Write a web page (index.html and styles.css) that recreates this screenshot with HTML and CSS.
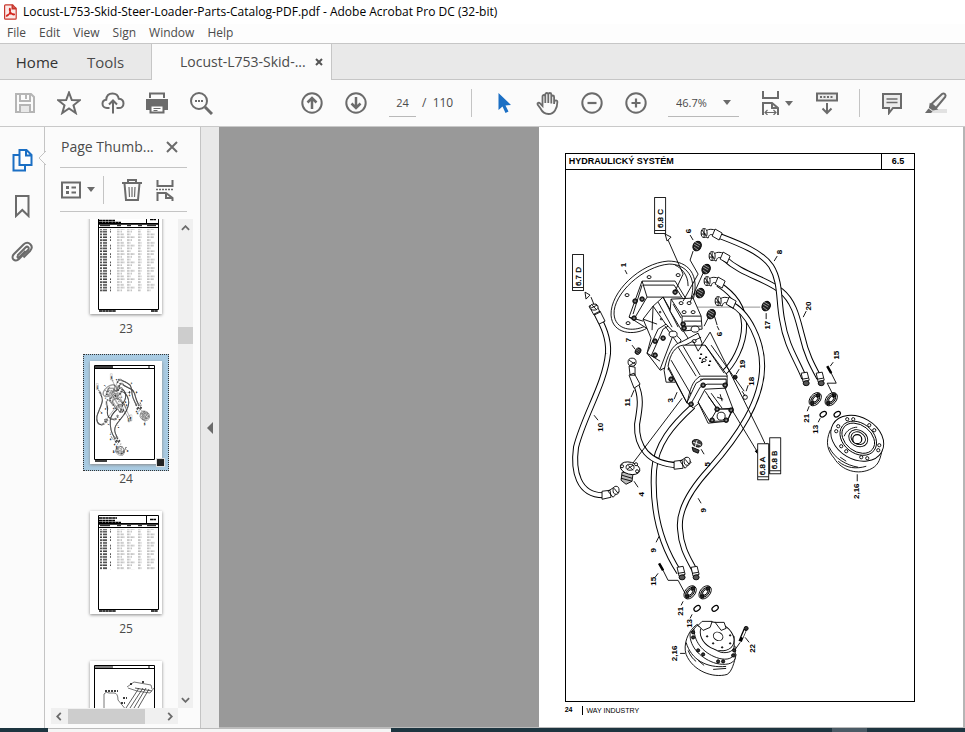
FILE: index.html
```html
<!DOCTYPE html>
<html lang="en">
<head>
<meta charset="utf-8">
<title>Locust-L753-Skid-Steer-Loader-Parts-Catalog-PDF.pdf - Adobe Acrobat Pro DC (32-bit)</title>
<link rel="stylesheet" href="styles.css">
</head>
<body>
<header class="titlebar">
  <svg class="app-icon" viewBox="0 0 13 16" aria-hidden="true"><path d="M1.5.8h7L12.2 4.500v9.800q0 .9-.9.900H1.500q-.9 0-.9-.9V1.700q0-.9.9-.9z" fill="#fbe9e7" stroke="#c8372d" stroke-width="1.200"/><path d="M8.500.8v3.700h3.700" fill="none" stroke="#c8372d"/><path d="M2.700 12.200C5 11.500 7 7 6.200 4.800c-.9-1.200-1.300 1.200.2 3.400 1 1.500 2.500 2.900 3.900 2.500 1.100-1-3.300-1.700-7 .3-1 .6-1.200 1.400-.6 1.200z" fill="none" stroke="#d3231b" stroke-width="1.200"/></svg>
  <span>Locust-L753-Skid-Steer-Loader-Parts-Catalog-PDF.pdf - Adobe Acrobat Pro DC (32-bit)</span>
</header>
<nav class="menubar" aria-label="Menu">
  <button>File</button><button>Edit</button><button>View</button><button>Sign</button><button>Window</button><button>Help</button>
</nav>
<nav class="tabs" aria-label="Tabs">
  <button class="tab-home">Home</button>
  <button class="tab-tools">Tools</button>
  <div class="tab-doc"><span>Locust-L753-Skid-...</span><button class="tab-close" aria-label="Close tab"><svg viewBox="0 0 8 8"><path d="M1 1l6 6M7 1L1 7"/></svg></button></div>
</nav>
<div class="toolbar" role="toolbar" aria-label="Tools">
  <button class="tool pale" aria-label="Save"><svg viewBox="0 0 24 24"><path d="M3 3h15l3 3v15H3z"/><path d="M7 3v7h10V3M13 4v4" /><path d="M7 21v-7h10v7" fill="#e8e8e8"/></svg></button>
  <button class="tool" aria-label="Star"><svg viewBox="0 0 24 24"><path d="M12 1.500l2.800 7.500 8 .3-6.300 5 2.200 7.700-6.700-4.500L5.300 22l2.200-7.700-6.300-5 8-.3z"/></svg></button>
  <button class="tool" aria-label="Upload"><svg viewBox="0 0 24 24"><path d="M8.500 17H6c-2.600 0-4.500-1.800-4.500-4.200 0-2.200 1.500-3.800 3.700-4C5.500 5 8 2.500 11.500 2.500c3.300 0 5.700 2.100 6.300 5.200 2.700.2 4.700 2.100 4.700 4.700 0 2.700-2 4.600-4.700 4.600h-2.300M12 22.500v-12M8 13.500l4-4 4 4"/></svg></button>
  <button class="tool" aria-label="Print"><svg viewBox="0 0 24 24"><path d="M5 7V2.500h14V7" /><path d="M1 8h22v11h-4v-4H5v4H1z" fill="#6b6b6b" stroke="none"/><path d="M5.500 14.500h13v7h-13z" fill="#fff"/><path d="M8.500 17.500h7M8.500 19.500h4" stroke-width="1"/></svg></button>
  <button class="tool" aria-label="Search"><svg viewBox="0 0 24 24"><circle cx="10" cy="10" r="8"/><path d="M16 16l7 7" stroke-width="3"/><path d="M6 10h2M9 10h2M12 10h2"/></svg></button>
  <button class="tool page-up" aria-label="Previous page"><svg viewBox="0 0 24 24"><circle cx="12" cy="12" r="9.700"/><path d="M12 18V8M7.500 11.500L12 7l4.500 4.500" stroke-width="2.500"/></svg></button>
  <button class="tool" aria-label="Next page"><svg viewBox="0 0 24 24"><circle cx="12" cy="12" r="9.700"/><path d="M12 6v10M7.500 12.500L12 17l4.500-4.500" stroke-width="2.500"/></svg></button>
  <input class="page-number" aria-label="Page number" value="24">
  <span class="page-count">/&nbsp; 110</span>
  <i class="divider"></i>
  <button class="tool select-tool" aria-label="Select"><svg viewBox="0 0 24 24"><path d="M6.500 2v17l4-3.500 3 6.500 3-1.500-3-6 5.500-.5z" fill="#1b6fc4" stroke="none"/></svg></button>
  <button class="tool" aria-label="Pan"><svg viewBox="0 0 24 24"><path d="M6.500 15V5.500c0-2 2.800-2 2.800 0V12 3.500c0-2 3-2 3 0V12 3.500c0-2 3-2 3 0V12.500 6c0-2 2.800-2 2.800 0v7l.3-2.500c.4-1.800 3-1.500 3 .3 0 3.500-.8 6.200-2.400 8.700-1.500 2.300-3.500 3.500-6.500 3.500-4.500 0-6.500-2.500-8-5.500L1.600 13.500c-.6-1.500 1.300-2.300 2.500-1.200L6.500 15z" stroke-width="1.800"/></svg></button>
  <button class="tool" aria-label="Zoom out"><svg viewBox="0 0 24 24"><circle cx="12" cy="12" r="9.700"/><path d="M7.500 12h9" stroke-width="2.200"/></svg></button>
  <button class="tool" aria-label="Zoom in"><svg viewBox="0 0 24 24"><circle cx="12" cy="12" r="9.700"/><path d="M7.500 12h9M12 7.500v9" stroke-width="2.200"/></svg></button>
  <div class="zoom-box"><select aria-label="Zoom level"><option>46.7%</option></select><svg class="caret" viewBox="0 0 8 5"><path d="M0 0h8L4 5z"/></svg></div>
  <button class="tool fit" aria-label="Fit width"><svg viewBox="0 0 24 24"><path d="M4 0v7h15V0M4 24V12h9l6 5v7M13 12v5h6"/><path d="M6.500 21.500h10M8.500 19l-2.500 2.500 2.500 2.500M14.500 19l2.500 2.500-2.500 2.500" stroke-width="1.200"/></svg><svg class="caret" viewBox="0 0 8 5"><path d="M0 0h8L4 5z"/></svg></button>
  <button class="tool reader" aria-label="Scrolling mode"><svg viewBox="0 0 24 24"><path d="M2 2.500h20v7H2z" fill="#ececec"/><path d="M5 6h2M8.500 6h2M12 6h2M15.500 6h2M12 12v10M7.500 17.500L12 22l4.500-4.500"/></svg></button>
  <i class="divider second"></i>
  <button class="tool comment" aria-label="Comment"><svg viewBox="0 0 24 24"><path d="M3 3h18v14h-8l-4 5v-5H3z" fill="#ececec"/><path d="M6.500 8h11M6.500 11.500h11" stroke-width="1.300"/></svg></button>
  <button class="tool" aria-label="Highlight"><svg viewBox="0 0 24 24"><path d="M9 18h14v4H5z" fill="#e2e2e2" stroke="none"/><path d="M7.500 13L18 3c2-1.500 4.500.5 3.200 3L12 17z" fill="#f1f1f1"/><path d="M6.500 13.500l5.500 4.500-3 .5-3-2z" fill="#6b6b6b"/><path d="M4.500 17.500l4 3-1.500 1.500H1z" fill="#6b6b6b" stroke="none"/></svg></button>
</div>

<main class="workspace">
  <nav class="rail" aria-label="Navigation panes">
    <button aria-label="Page thumbnails"><svg class="blue" viewBox="0 0 24 24"><path d="M9.500 2h7l5 5v10h-12zM16 2v5.500h5.500" fill="#fff"/><path d="M9 7H3.500v15.500H15V18" fill="none"/></svg></button>
    <button aria-label="Bookmarks"><svg viewBox="0 0 24 24"><path d="M6 2h12.500v20l-6.200-6L6 22z"/></svg></button>
    <button aria-label="Attachments"><svg viewBox="0 0 24 24"><path d="M7.500 15.500l8-8c2-2 4.500.5 2.500 2.500l-9 9c-4 4-9-1-5-5L13.500 4.500c5-4.500 11 1.500 6.500 6.500l-6.500 6.500M8 15.500c-1.500 2 .5 3 1.500 1.500l6-6"/></svg></button>
  </nav>
  <section class="panel" aria-label="Page thumbnails">
    <svg class="pointer" viewBox="0 0 8 14"><path d="M8 0L1 7l7 7" /></svg>
    <div class="panel-head"><h2>Page Thumb...</h2><button aria-label="Close panel"><svg viewBox="0 0 12 12"><path d="M1 1l10 10M11 1L1 11"/></svg></button></div>
    <div class="panel-tools">
      <button class="options" aria-label="Options"><svg viewBox="0 0 20 18"><path d="M1 1.500h18v15H1z"/><path d="M5 6.500h3M5 11.500h3" stroke-width="3"/><path d="M10.500 6.500H15M10.500 11.500H15"/></svg><svg class="caret" viewBox="0 0 8 5"><path d="M0 0h8L4 5z"/></svg></button>
      <i class="divider"></i>
      <button class="bin" aria-label="Delete pages"><svg viewBox="0 0 22 24"><path d="M1 5h20M7 5V2h8v3M3.500 5.500L5 22h12l1.500-16.500"/><path d="M8 9l.5 10M11 9v10M14 9l-.5 10" stroke-width="1.200"/></svg></button>
      <button aria-label="Split"><svg viewBox="0 0 20 24"><path d="M2.500 2v6h15V2M2.500 23v-8H11l6.500 5v3M11 15v5h6.500"/><path d="M1 11.500h18" stroke-dasharray="2 1" stroke-width="1.500"/></svg></button>
    </div>
    <div class="thumb-area">
      <div class="thumb-view"><ol class="thumbs">
        <li><a href="#p23" aria-label="Page 23"><svg viewBox="0 0 72 103"><use href="#list-page"/><path d="M10 18h56v63H10z" fill="url(#rows)" stroke="none"/></svg></a><span>23</span></li>
        <li class="current"><a href="#p24" aria-label="Page 24"><svg viewBox="0 0 72 103"><path d="M4.500 4.500h60v94h-60zM4.500 7.500h60M59 4v4" fill="none" stroke="#000"/><path d="M5 6h18M5 100h12" stroke="#000" stroke-width="1.500"/><svg x="5" y="8" width="60" height="91" viewBox="566 170 348 531" class="mini"><use href="#assembly"/></svg></svg><i></i></a><span>24</span></li>
        <li><a href="#p25" aria-label="Page 25"><svg viewBox="0 0 72 103"><use href="#list-page"/><path d="M10 18h56v41H10z" fill="url(#rows)" stroke="none"/></svg></a><span>25</span></li>
        <li><a href="#p26" aria-label="Page 26"><svg viewBox="0 0 72 103"><path d="M4.500 4.500h60v94h-60zM4.500 7.500h60M59 4v4M5 6h18" fill="none" stroke="#000"/><g fill="none" stroke="#555" stroke-width=".8"><path d="M14 50V33q2-3 5-1h5q4 0 4 7l9 11M37 26l7-5 17 3 1 4M38 27l9 3 13 2 4-5"/><path d="M36 47l13-20M40 47l13-20M44 47l12-20M48 47l11-19M45 27l17 3" stroke="#333"/><path d="M15 30h13M33 37h4M31 42h4M40 23h3M52 21h3" stroke="#000" stroke-width="1.500" stroke-dasharray="2 1"/></g></svg></a></li>
      </ol></div>
      <div class="vscroll"><svg viewBox="0 0 10 6"><path d="M1 5l4-4 4 4"/></svg><i></i><svg viewBox="0 0 10 6"><path d="M1 1l4 4 4-4"/></svg></div>
      <div class="hscroll"><svg viewBox="0 0 6 10"><path d="M5 1L1 5l4 4"/></svg><i></i><svg viewBox="0 0 6 10"><path d="M1 1l4 4-4 4"/></svg></div>
    </div>
  </section>
  <button class="splitter" aria-label="Collapse panel"><svg viewBox="0 0 6 12"><path d="M6 0v12L0 6z"/></svg></button>
  <section class="canvas" aria-label="Document">
    <article class="page" id="p24">
      <div class="sheet">
        <header><h1>HYDRAULICKÝ SYSTÉM</h1><b>6.5</b></header>
        <svg class="drawing" viewBox="566 170 348 531" role="img" aria-label="Hydraulic system assembly">
          <defs>
            <pattern id="rows" width="72" height="8.400" patternUnits="userSpaceOnUse"><path d="M10 1h2M13 1h4M20 1h1M10 3.800h2M12.500 3.800h4.500M20 3.800h1M10 6.600h2M13 6.600h4" stroke="#000" stroke-width="1.200"/><path d="M27 1h8M37 1h8M48 1h4M57 1h7M27 3.800h5M37 3.800h5M48 3.800h3M57 3.800h4M27 6.600h7M37 6.600h4M48 6.600h4M57 6.600h8" stroke="#777" stroke-width=".8" stroke-dasharray="2 .4 1 .5"/></pattern>
            <g id="list-page" fill="none" stroke="#000"><path d="M8.500 4.500h60v94h-60zM8.500 13h60M8.500 16.500h60M56.500 4.500V13"/><path d="M9 12.700h59" stroke-width="1.500"/><path d="M9 7h18M9 9.500h16M9 11.500h22M60 8.500h6M9 100h17M61 100h7" stroke-width="1.500" stroke-dasharray="3 .3"/><path d="M10 14.700h10M27 14.700h4M37 14.700h4M48 14.700h4M57 14.700h9"/></g>
            <g id="plug"><ellipse rx="4" ry="5" transform="rotate(30)" fill="#222"/><path d="M-3-2l5 3M-2-4l5 3M-3 1l4 3" stroke="#ccc" stroke-width=".7"/></g>
            <g id="bolt"><circle r="2.300" fill="#333"/><circle r=".6" fill="#fff" stroke="none"/></g>
            <g id="elbow"><path d="M0 3C0-4 7-6 15-1l-3 5C7 0 5 1 4 5z"/><ellipse cx="0" cy="0" rx="3" ry="4.500"/><path d="M-2-3l4 6M-3 1h5M0-4v8"/><path d="M11-4l7 4-3 7-7-4z"/></g>
            <g id="hoseend"><path d="M-3-8l6-1 2 8-6 2z"/><ellipse cx="2" cy="2" rx="3" ry="2.500" fill="#555"/><path d="M-2-2l6-1"/></g>
            <g id="clamp"><ellipse rx="7.500" ry="5" transform="rotate(-50)"/><ellipse rx="5.500" ry="3.500" transform="rotate(-50)" fill="#999"/><ellipse rx="3" ry="2" transform="rotate(-50)"/><circle cx="3" cy="-4" r="1.700" fill="#222"/><circle cx="-3" cy="4" r="1.700" fill="#222"/></g>
            <path id="h8" d="M717 235C735 242 761 251 771 266C781 282 778 300 782 320C786 346 797 360 804 378"/>
            <path id="h20" d="M724 258C742 275 765 278 781 291C795 302 798 322 802 336C806 354 812 365 819 378"/>
            <path id="hA" d="M718 284C735 295 743 307 744 325C744 345 733 365 722 374M693 406C672 425 656 444 654 470C652 503 658 540 679 572"/>
            <path id="hB" d="M729 303C749 312 762 342 762 366C762 400 739 435 709 469C688 492 678 512 680 529C681 548 689 559 695 571"/>
            <path id="h10" d="M597 314C603 326 609 338 608 353C605 384 584 415 576 447C573 469 577 496 605 495"/>
            <path id="h11" d="M635 382C642 397 640 407 637 424C636 446 648 464 678 465"/>
          </defs>
          <g id="assembly" class="assembly" fill="#fff" stroke="#000" stroke-linejoin="round">
            <path d="M696 307h64" stroke="#888"/>
            <g class="hose"><use href="#h20"/><use href="#h20" class="bore"/><use href="#h8"/><use href="#h8" class="bore"/><use href="#hA"/><use href="#hA" class="bore"/><use href="#hB"/><use href="#hB" class="bore"/><use href="#h10"/><use href="#h10" class="bore"/><use href="#h11"/><use href="#h11" class="bore"/></g>
            <!-- mounting flange -->
            <path d="M693 300C700 274 688 261 668 261C640 263 610 292 611 315C612 334 634 336 647 328"/>
            <path d="M691 298C697 277 686 264 669 264C643 266 613 294 614 314C615 330 633 332 645 326M688 286C688 274 681 268 675 265" fill="none"/>
            <ellipse cx="649" cy="277" rx="2" ry="1.500"/><ellipse cx="678" cy="275" rx="2" ry="1.500"/><ellipse cx="627" cy="295" rx="2" ry="1.500"/><ellipse cx="628" cy="323" rx="2" ry="1.500"/>
            <!-- pump rear housing -->
            <path d="M642 281h33l11 18-8 23-30 7-19-12z"/>
            <path d="M643 285h31l9 14M642 281l5 16-13 22M647 297h34M642 285l-9 29M629 317l14 4" fill="none"/>
            <use href="#bolt" x="635" y="301"/><use href="#bolt" x="642" y="299"/><use href="#bolt" x="634" y="318"/><use href="#bolt" x="675" y="292"/>
            <path d="M643 319l10-13 10-9 13 23 12 18-17 20-10 12-14-17 4-15z"/>
            <path d="M653 306l14 20M663 297l15 30M658 302l14 25M643 319l14 5M653 306l-1 24" fill="none"/>
            <circle cx="660" cy="312" r=".8"/><circle cx="661" cy="319" r=".8"/>
            <!-- port block -->
            <path d="M671 299l22-1 8 18 1 13-20 2-12-20z"/><path d="M671 299l11 17h19M682 316v14M673 304l8 14M684 321h17M684 326h17" fill="none"/>
            <ellipse cx="681" cy="303" rx="2" ry="1.500"/><ellipse cx="689" cy="303" rx="2" ry="1.500"/><ellipse cx="684" cy="312" rx="2" ry="1.500"/><ellipse cx="693" cy="312" rx="2" ry="1.500"/>
            <path d="M647 353l11-24 8-5 15 16-13 26-8 4z"/><path d="M651 356l12-27 5-3M660 369l13-34M647 353l13 8M665 326l13 18" fill="none"/>
            <use href="#bolt" x="683" y="324"/><use href="#bolt" x="684" y="328"/><ellipse cx="695" cy="329" rx="4" ry="3"/><ellipse cx="673" cy="334" rx="4" ry="3"/>
            <use href="#bolt" x="655" y="341"/><use href="#bolt" x="663" y="338"/><use href="#bolt" x="655" y="355"/>
            <!-- centre flange and main pump -->
            <path d="M664 370c3-14 8-26 17-28l17-9 4 10-4 12-23 27h-9z"/><path d="M668 370c2-13 8-22 15-24l18-9" fill="none"/><use href="#bolt" x="671" y="379"/><ellipse cx="694" cy="341" rx="2" ry="1.500"/>
            <path d="M668 366c2-12 7-20 15-21h22l22 30v10l-28 13-12 5z"/>
            <path d="M668 368l19 35M671 360l21 36M683 346l17 29M705 345l19 28M678 347l18 29M687 403c3-14 5-22 13-27h27M692 405c2-14 5-18 11-23h24M700 379h26" fill="none"/>
            <path d="M687 402l9-19 7-4h23v9l-18 7-15 13z"/><path d="M690 405l10-18 7-3h20" fill="none"/>
            <path d="M698 402l7-13 20-1 8 21-6 12-19 2z"/><path d="M698 402l12 20M705 391l12 18 16-1M717 409l-6 13M708 396l11 15M711 393l11 15" fill="none"/>
            <path d="M717 409h15l-5 12h-17z"/><circle cx="721" cy="416" r="4"/>
            <use href="#bolt" x="703" y="385"/><use href="#bolt" x="725" y="385"/><use href="#bolt" x="691" y="404"/><use href="#bolt" x="717" y="409"/><use href="#bolt" x="731" y="410"/><use href="#bolt" x="712" y="420"/><use href="#bolt" x="726" y="420"/>
            <path d="M699 358h2M705 357h2M701 362h2M709 361h2M700 354h2M708 365h2" stroke-width="1.500"/><ellipse cx="704" cy="360" rx="2" ry="1.500"/><path d="M717 397l6 2M720 394l2 7" />
            <!-- leader lines -->
            <g fill="none"><path d="M668 240l15 34-8 17M693 251l-3 9 8 14-15 27M703 273l-13 29M708 318l-4 8M693 341l5 10 12-19 50 101 7 15M732 410l26 43M632 464l50-66M591 297l4 10M711 345l33 46M714 315l3 10"/></g>
            <path d="M665 234l6 3-4 4zM585 292l5 3-4 4z"/><path d="M758 449l1 6-4-4zM767 443l1 6-4-4z" fill="#000"/>
            <!-- fittings -->
            <use href="#plug" x="697" y="246"/><use href="#plug" x="706" y="269"/><use href="#plug" x="700" y="293"/><use href="#plug" x="711" y="314"/><use href="#plug" x="766" y="306"/>
            <g transform="translate(638 351) scale(.7)"><use href="#plug"/></g>
            <use href="#elbow" x="704" y="233"/><use href="#elbow" x="712" y="256"/><use href="#elbow" x="707" y="281"/><use href="#elbow" x="718" y="301"/>
            <path d="M589 306l7-2 4 8-6 3zM594 314l6-3 5 10-6 3zM629 375l5-2 6 11-6 4zM629 366l6 1v8h-5z"/><ellipse cx="594" cy="307" rx="4" ry="3"/><path d="M591 308l6-3M592 305l4 4"/><ellipse cx="632" cy="362" rx="4" ry="4"/><path d="M629 360l6 4M630 365l5-3"/>
            <path d="M674 461l8-1 1 8-9 1zM680 461l6-4 5 5-6 6z"/><ellipse cx="687" cy="461" rx="3" ry="4"/><path d="M685 459l4 5M602 491l8-1 1 7-9 2zM608 491l6-4 5 4-6 6z"/><ellipse cx="616" cy="490" rx="3" ry="4"/><path d="M614 488l4 5"/>
            <path d="M622 472l-1 8 5 4 6-3 1-8z" fill="#bbb"/><path d="M621 478l11 3M622 475l10 3"/><ellipse cx="630" cy="468" rx="10" ry="6" transform="rotate(15 630 468)"/><ellipse cx="630" cy="467" rx="4" ry="3"/><circle cx="622" cy="466" r="1.500"/><circle cx="637" cy="471" r="1.500"/><circle cx="636" cy="464" r="1.500"/><path d="M627 469l6-4M628 465l5 5"/>
            <ellipse cx="697" cy="443" rx="5" ry="3.500" transform="rotate(20 697 443)" fill="#444"/><path d="M692 447l7 3-1 3-5-2z" fill="#444"/><path d="M693 442l8 3M697 440l-2 7" stroke="#fff"/>
            <circle cx="735" cy="377" r="2" fill="#222"/><circle cx="745" cy="397" r="2.200"/><path d="M742 391l3 5"/>
            <use href="#hoseend" x="804" y="381"/><use href="#hoseend" x="819" y="381"/><use href="#hoseend" x="680" y="575"/><use href="#hoseend" x="694" y="575"/>
            <use href="#clamp" x="815" y="399"/><use href="#clamp" x="831" y="399"/><use href="#clamp" x="690" y="592"/><use href="#clamp" x="705" y="592"/>
            <g stroke-width="1.200"><ellipse cx="823" cy="414" rx="3.500" ry="2.300" transform="rotate(-35 823 414)"/><ellipse cx="837" cy="414" rx="3.500" ry="2.300" transform="rotate(-35 837 414)"/><ellipse cx="697" cy="608" rx="3.500" ry="2.300" transform="rotate(-35 697 608)"/><ellipse cx="715" cy="608" rx="3.500" ry="2.300" transform="rotate(-35 715 608)"/></g>
            <path d="M828 367l8 16h-9l7 14M660 564l8 16h10l7 13M733 652l7-10" fill="none"/><path d="M827 366l4 7M659 563l4 7" stroke-width="2.500"/><path d="M740 641l5-12" stroke-width="3.500"/><path d="M742 637l3-7" stroke="#fff" stroke-width="1.500"/><circle cx="746" cy="628" r="2" fill="#333"/>
            <!-- wheel motor, right -->
            <path d="M830 430c-5 12-3 20 4 28 7 12 24 18 38 10 7-4 8-10 10-19z"/>
            <ellipse cx="857" cy="438" rx="28" ry="21" transform="rotate(30 857 438)"/><ellipse cx="858" cy="438" rx="20" ry="15" transform="rotate(38 858 438)"/><ellipse cx="858" cy="438" rx="18" ry="13" transform="rotate(38 858 438)"/><ellipse cx="858" cy="438" rx="10" ry="8" transform="rotate(30 858 438)"/><ellipse cx="858" cy="438" rx="7.500" ry="6" transform="rotate(30 858 438)"/><circle cx="857" cy="439" r="4.500" stroke-width="1.200"/>
            <path d="M829 447c5 11 17 18 29 20M838 461c8 7 18 8 28 5M840 457l6 4M844 436c2-6 8-9 13-9" fill="none"/>
            <g><circle cx="847" cy="419" r="1.600"/><circle cx="853" cy="419" r="1.600"/><circle cx="869" cy="425" r="1.600"/><circle cx="874" cy="430" r="1.600"/><circle cx="879" cy="445" r="1.600"/><circle cx="878" cy="450" r="1.600"/><circle cx="867" cy="458" r="1.600"/><circle cx="861" cy="457" r="1.600"/><circle cx="846" cy="451" r="1.600"/><circle cx="841" cy="446" r="1.600"/><circle cx="836" cy="431" r="1.600"/><circle cx="838" cy="426" r="1.600"/></g>
            <!-- wheel motor, left -->
            <path d="M697 624c-10 7-14 21-11 30 7 17 27 24 41 20 5-3 7-12 9-20z"/>
            <path d="M690 633c-1 14 12 26 26 30 9 2 17 1 19-5v-12l-38-21z"/>
            <path d="M694 629c0 14 11 25 25 29 8 2 14 0 15-5M686 642c5 17 20 26 40 24M698 660l6 5M713 669l13-1M688 650c2 5 5 9 8 11" fill="none"/>
            <path d="M702 625c-1 12 7 23 19 27 7 1 13-1 13-7v-9z"/>
            <ellipse cx="717" cy="636" rx="18" ry="13" transform="rotate(30 717 636)"/><path d="M698 625l4-4h10l-2 6-7 3zM715 622h9l2 6-5 2z"/><ellipse cx="718" cy="636" rx="5" ry="4" transform="rotate(30 718 636)"/>
            <g fill="#333"><circle cx="693" cy="632" r="1.600"/><circle cx="693" cy="637" r="1.600"/><circle cx="698" cy="650" r="1.600"/><circle cx="703" cy="654" r="1.600"/><circle cx="718" cy="661" r="1.600"/><circle cx="723" cy="661" r="1.600"/><circle cx="733" cy="655" r="1.600"/><circle cx="734" cy="650" r="1.600"/><circle cx="707" cy="636" r=".7"/><circle cx="713" cy="643" r=".7"/><circle cx="722" cy="647" r=".7"/><circle cx="730" cy="643" r=".7"/><circle cx="730" cy="635" r=".7"/></g>
            <!-- callout ticks -->
            <path d="M625 270l2 4M690 235l3 5M777 256l-3 5M806 311l-3 6M766 313v6M833 362l-3 4M809 406l-2 5M820 418l-2 4M857 474v7M674 399l3-7M634 390l-3 7M594 415l4 5M701 449l3 5M634 481l4 6M632 345l3 4M698 498l3 5M659 536l-3 6M658 573l-3 4M683 601l-2 4M692 614l-2 4M680 653h5M745 637l4 5M739 369l-3 5M748 385l-2 6M717 326l2 4" fill="none"/>
            <g stroke-width="1" stroke="#222"><path d="M654.500 197.500h11v36h-11zM654.500 230.500h11M572.500 254.500h11v36h-11zM572.500 287.500h11M757.500 443.500h11v36h-11zM757.500 476.500h11M769.500 437.500h11v36h-11zM769.500 470.500h11"/></g>
            <g class="refs"><text transform="translate(663 228) rotate(-90)">6.8 C</text><text transform="translate(581 286) rotate(-90)">6.7 D</text><text transform="translate(765 475) rotate(-90)">6.8 A</text><text transform="translate(777 469) rotate(-90)">6.8 B</text></g>
            <g class="callouts"><text transform="translate(626 265) rotate(-90)">1</text><text transform="translate(691 231) rotate(-90)">6</text><text transform="translate(782 252) rotate(-90)">8</text><text transform="translate(811 306) rotate(-90)">20</text><text transform="translate(770 325) rotate(-90)">17</text><text transform="translate(839 355) rotate(-90)">15</text><text transform="translate(809 418) rotate(-90)">21</text><text transform="translate(818 429) rotate(-90)">13</text><text transform="translate(859 491) rotate(-90)">2,16</text><text transform="translate(745 364) rotate(-90)">19</text><text transform="translate(754 381) rotate(-90)">18</text><text transform="translate(631 340) rotate(-90)">7</text><text transform="translate(722 334) rotate(-90)">6</text><text transform="translate(673 400) rotate(-90)">3</text><text transform="translate(630 402) rotate(-90)">11</text><text transform="translate(603 427) rotate(-90)">10</text><text transform="translate(710 464) rotate(-90)">5</text><text transform="translate(644 494) rotate(-90)">4</text><text transform="translate(706 510) rotate(-90)">9</text><text transform="translate(656 550) rotate(-90)">9</text><text transform="translate(656 581) rotate(-90)">15</text><text transform="translate(683 611) rotate(-90)">21</text><text transform="translate(692 623) rotate(-90)">13</text><text transform="translate(677 653) rotate(-90)">2,16</text><text transform="translate(755 648) rotate(-90)">22</text></g>
          </g>
        </svg>
      </div>
      <footer><b>24</b><span>WAY INDUSTRY</span></footer>
    </article>
  </section>
</main>
<div class="desktop-strip"><i class="strip-left"></i><i class="strip-window"></i><i class="strip-mid"></i><i class="strip-button"></i><i class="strip-right"></i></div>
</body>
</html>
```
FILE: styles.css
```css
* { box-sizing: border-box; }
body {
  margin: 0; height: 100vh; overflow: hidden;
  display: flex; flex-direction: column;
  background: #fbfbfb; color: #4b4b4b;
  font: 12px/16px "Open Sans", "Noto Sans", sans-serif;
}
button, input, select { font: inherit; color: inherit; border: 0; padding: 0; background: none; border-radius: 0; }
svg { display: block; fill: none; stroke: #6b6b6b; stroke-width: 2; }
.caret { width: 8px; height: 5px; fill: #6b6b6b; stroke: none; }
i { display: block; }

.titlebar { display: flex; align-items: center; gap: 6px; height: 24px; padding-left: 4px; background: #fff; color: #000; white-space: nowrap; }
.app-icon { width: 13px; height: 16px; stroke: none; }
.menubar { display: flex; gap: 13px; height: 19px; padding-left: 7px; align-items: center; background: #fdfdfd; }
.menubar button { line-height: 14px; padding-bottom: 2px; }
.tabs { display: flex; height: 37px; background: #e9e9e9; border-top: 1px solid #c6c6c6; font-size: 15px; line-height: 20px; }
.tabs > * { border-bottom: 1px solid #c6c6c6; }
.tabs::after { content: ""; flex: 1; border-bottom: 1px solid #c6c6c6; }
.tab-home { width: 74px; color: #333; }
.tab-tools { width: 77px; padding-right: 14px; }
.tab-doc { display: flex; align-items: center; justify-content: space-between; width: 181px; padding: 0 8px 0 28px; background: #fbfbfb; border: solid #c6c6c6; border-width: 0 1px; font-size: 14px; }
.tabs .tab-doc { border-bottom: 0; }
.tab-close svg { width: 8px; height: 8px; stroke: #555; }

.toolbar { display: flex; align-items: center; flex: none; height: 47px; padding-left: 3px; border-bottom: 1px solid #c9c9c9; }
.tool { display: flex; align-items: center; justify-content: center; flex: none; width: 44px; height: 44px; }
.tool > svg:first-child { width: 24px; height: 24px; flex: none; }
.pale svg { stroke: #b5b5b5; }
.page-up { margin-left: 67px; }
.page-number { width: 27px; height: 28px; margin: 0 6px 0 11px; text-align: center; border-bottom: 1px solid #b9b9b9; font-size: 11px; }
.page-count { width: 49px; white-space: pre; }
.divider { width: 1px; height: 28px; background: #c4c4c4; flex: none; }
.select-tool { margin-left: 10px; }
.zoom-box { display: flex; align-items: center; width: 71px; height: 28px; margin-left: 10px; padding-right: 8px; border-bottom: 1px solid #b9b9b9; font-size: 11px; }
.zoom-box select { flex: 1; min-width: 0; padding-left: 8px; appearance: none; }
.fit { width: 34px; margin-left: 20px; gap: 2px; }
.reader { margin-left: 12px; }
.second { margin-left: 10px; }
.comment { margin-left: 10px; }

.workspace { display: flex; flex: 1; min-height: 0; }
.rail { display: flex; flex-direction: column; gap: 22px; align-items: center; width: 44px; padding-top: 21px; flex: none; }
.rail svg { width: 24px; height: 24px; }
.rail .blue { stroke: #1b6fc4; }
.panel { position: relative; display: flex; flex-direction: column; flex: none; width: 157px; border: solid #c4c4c4; border-width: 0 1px; }
.pointer { position: absolute; left: -7px; top: 24px; width: 8px; height: 14px; fill: #fbfbfb; stroke: #c4c4c4; stroke-width: 1; }
.panel-head { display: flex; align-items: center; justify-content: space-between; height: 41px; margin: 0 13px 0 15px; padding: 0 9px 0 1px; border-bottom: 1px solid #c4c4c4; }
.panel-head h2 { margin: 0; font-size: 14px; line-height: 20px; font-weight: 400; }
.panel-head svg { width: 12px; height: 12px; }
.panel-tools { display: flex; align-items: center; height: 44px; margin: 0 13px 0 15px; padding-left: 1px; border-bottom: 1px solid #c4c4c4; }
.options { display: flex; align-items: center; gap: 6px; margin-right: 8px; }
.options > svg:first-child { width: 20px; height: 18px; }
.bin { margin: 0 12px 0 17px; }
.bin svg { width: 22px; height: 24px; }
.bin + button svg { width: 20px; height: 24px; }
.thumb-area { display: grid; grid-template: minmax(0, 1fr) 16px / 127px 16px; flex: 1; min-height: 0; margin: 7px 0 4px 6px; }
.thumb-view { overflow: hidden; }
.thumbs { list-style: none; margin: -15px 0 0; padding: 0 0 0 32px; }
.thumbs li { height: 150px; width: 86px; text-align: center; }
.thumbs a { position: relative; display: block; padding: 6px; border: 1px solid transparent; height: 117px; }
.thumbs a > svg { width: 100%; height: 103px; background: #fff; box-shadow: 0 1px 3px #888; stroke-width: 1; }
.thumbs .current a { background: #a9cbe2; border: 1px dotted #333; }
.thumbs a i { position: absolute; right: 4px; bottom: 4px; width: 7px; height: 7px; background: #222; outline: 1px solid #ddd; }
.thumbs span { display: block; }
.mini { --line: 1.8; --bore: 2; --text-line: 1; }
.vscroll, .hscroll { display: flex; justify-content: space-between; align-items: center; background: #f0f0f0; }
.vscroll { flex-direction: column; padding: 6px 0 5px; width: 15px; }
.vscroll svg { width: 9px; height: 6px; flex: none; }
.vscroll i { width: 15px; height: 17px; margin: auto 0 253px; background: #cdcdcd; }
.vscroll svg:last-child { margin-top: 100px; }
.hscroll { padding: 0 5px; }
.hscroll svg { width: 6px; height: 9px; }
.hscroll i { width: 77px; height: 15px; background: #cdcdcd; margin-right: 16px; }
.splitter { display: flex; align-items: center; justify-content: center; width: 18px; flex: none; background: #e9e9e9; }
.splitter svg { width: 6px; height: 12px; fill: #6b6b6b; stroke: none; }

.canvas { display: grid; grid-template-columns: 3fr 4fr; flex: 1; min-width: 0; background: #999; overflow: hidden; border-bottom: 1px solid #bbb; }
.page { grid-column: 2; padding: 26px 48px 0 26px; background: #fff; border-right: 2px solid #b5b5b5; color: #000; font: 9px/12px "Liberation Sans", Arial, sans-serif; }
.sheet { border: 1px solid #000; }
.sheet header { display: flex; height: 16px; border-bottom: 1px solid #000; align-items: stretch; justify-content: space-between; }
.sheet h1 { margin: 0; padding-left: 3px; font-size: 9px; line-height: 14px; }
.sheet header b { width: 33px; border-left: 1px solid #000; text-align: center; line-height: 14px; }
.drawing { width: 100%; height: auto; }
.assembly { stroke-width: var(--line, .9); }
.hose { fill: none; stroke-width: 6; }
.bore { stroke: #fff; stroke-width: var(--bore, 4); }
.refs, .callouts { fill: #000; font: 8px "Liberation Sans", Arial, sans-serif; stroke-width: var(--text-line, 0); }
.refs { stroke-width: var(--text-line, .3); }
.callouts { font-weight: 700; text-anchor: middle; }
.page footer { display: flex; gap: 9px; padding-top: 2px; font-size: 7px; align-items: center; }
.page footer span { padding-left: 4px; line-height: 9px; border-left: 1px solid #000; }

.desktop-strip { display: grid; grid-template-columns: 48fr 343fr 441fr 35fr 98fr; height: 4px; flex: none; background: #1d3540; }
.strip-window { background: #f5f5f5; border-top: 1px solid #bbb; }
.strip-button { background: #4b5b66; }
```
